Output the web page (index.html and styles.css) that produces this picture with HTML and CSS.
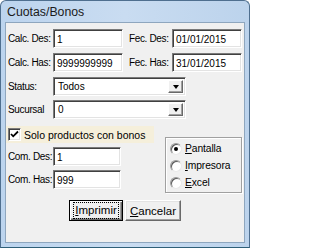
FILE: index.html
```html
<!DOCTYPE html>
<html>
<head>
<meta charset="utf-8">
<link rel="stylesheet" href="styles.css">
</head>
<body>
<div class="window">
  <div class="titlebar">Cuotas/Bonos</div>
  <div class="client">
    <div class="row r1">
      <span class="lbl">Calc. Des:</span><span class="tb w70">1</span>
      <span class="lbl lbl2">Fec. Des:</span><span class="tb w70">01/01/2015</span>
    </div>
    <div class="row r2">
      <span class="lbl">Calc. Has:</span><span class="tb w70">9999999999</span>
      <span class="lbl lbl2">Fec. Has:</span><span class="tb w70">31/01/2015</span>
    </div>
    <div class="row r3">
      <span class="lbl">Status:</span>
      <span class="combo"><span class="combo-text">Todos</span><span class="drop"><span class="arrow"></span></span></span>
    </div>
    <div class="row r4">
      <span class="lbl">Sucursal</span>
      <span class="combo"><span class="combo-text">0</span><span class="drop"><span class="arrow"></span></span></span>
    </div>
    <div class="lower">
      <div class="left">
        <div class="check-band">
          <span class="check"><svg width="9" height="9" viewBox="0 0 9 9"><polyline points="1,4 3.2,6.3 8,1.5" fill="none" stroke="#000" stroke-width="1.8"/></svg></span>
          <span class="check-text">Solo productos con bonos</span>
        </div>
        <div class="row r5">
          <span class="lbl">Com. Des:</span><span class="tb w68">1</span>
        </div>
        <div class="row">
          <span class="lbl">Com. Has:</span><span class="tb w68">999</span>
        </div>
      </div>
      <div class="group">
        <div class="radio-row"><span class="radio on"></span><span class="radio-text"><u>P</u>antalla</span></div>
        <div class="radio-row"><span class="radio"></span><span class="radio-text"><u>I</u>mpresora</span></div>
        <div class="radio-row"><span class="radio"></span><span class="radio-text"><u>E</u>xcel</span></div>
      </div>
    </div>
    <div class="buttons">
      <button class="btn default"><span class="focus"><u>I</u>mprimir</span></button>
      <button class="btn"><u>C</u>ancelar</button>
    </div>
  </div>
</div>
</body>
</html>
```

FILE: styles.css
```css
* { box-sizing: border-box; }
html, body { margin: 0; padding: 0; }
body {
  width: 250px;
  height: 248px;
  overflow: hidden;
  background: #ffffff;
  font-family: "Liberation Sans", Arial, sans-serif;
  font-size: 10px;
  color: #000;
}
.window {
  width: 250px;
  height: 248px;
  border: 1px solid #4f6f8f;
  border-bottom-color: #2f5f78;
  border-radius: 6px 6px 0 0;
  background: linear-gradient(90deg, #bcd4ee, #c9dcf1 50%, #bcd3ec);
  display: flex;
  flex-direction: column;
  padding: 0 4px 4px;
}
.titlebar {
  height: 21px;
  flex: none;
  display: flex;
  align-items: center;
  padding: 1px 0 0 2px;
  font-size: 12.3px;
  color: #1b1b1b;
}
.client {
  flex: 1;
  background: #f0f0f0;
  border: 1px solid #8ea6be;
  padding: 6px 0 0 1px;
}
.row {
  display: flex;
  align-items: center;
  height: 19px;
}
.r1, .r2 { margin-bottom: 5px; }
.r3 { margin-bottom: 4px; }
.r4 { margin-bottom: 7px; }
.r5 { margin-bottom: 4px; }
.lbl {
  width: 46px;
  padding-left: 1px;
  font-size: 10px;
  letter-spacing: -0.35px;
  white-space: nowrap;
}
.lbl2 { width: 44px; margin-left: 5px; }
.tb {
  height: 19px;
  background: #fff;
  border-style: solid;
  border-width: 1px;
  border-color: #7a7a7a #ffffff #ffffff #7a7a7a;
  box-shadow: inset 1px 1px 0 #404040, inset -1px -1px 0 #e3e3e3;
  padding: 1px 0 0 3px;
  display: flex;
  align-items: center;
  white-space: nowrap;
}
.w70 { width: 70px; }
.w68 { width: 68px; }
.combo {
  width: 133px;
  height: 19px;
  background: #fff;
  border-style: solid;
  border-width: 1px;
  border-color: #7a7a7a #ffffff #ffffff #7a7a7a;
  box-shadow: inset 1px 1px 0 #404040, inset -1px -1px 0 #e3e3e3;
  padding: 2px 2px 2px 3px;
  display: flex;
  align-items: stretch;
}
.combo-text {
  flex: 1;
  display: flex;
  align-items: center;
  padding-left: 1px;
}
.drop {
  width: 15px;
  background: #f0f0f0;
  border-style: solid;
  border-width: 1px;
  border-color: #ffffff #696969 #696969 #ffffff;
  box-shadow: inset -1px -1px 0 #a0a0a0;
  display: flex;
  align-items: center;
  justify-content: center;
}
.arrow {
  width: 0;
  height: 0;
  border-left: 3.5px solid transparent;
  border-right: 3.5px solid transparent;
  border-top: 4px solid #000;
  margin-top: 1px;
}
.lower {
  display: flex;
  align-items: flex-start;
}
.left { width: 158px; }
.check-band {
  margin-left: -1px;
  width: 148px;
  height: 17px;
  background: #f5efdb;
  display: flex;
  align-items: center;
  padding-left: 2px;
  margin-bottom: 4px;
}
.check {
  width: 13px;
  height: 13px;
  background: #fff;
  border-style: solid;
  border-width: 1px;
  border-color: #7a7a7a #ffffff #ffffff #7a7a7a;
  box-shadow: inset 1px 1px 0 #404040, inset -1px -1px 0 #e3e3e3;
  display: flex;
  align-items: center;
  justify-content: center;
  margin-right: 3px;
}
.check svg { display: block; }
.check-text {
  font-size: 10.5px;
  white-space: nowrap;
}
.group {
  width: 77px;
  height: 56px;
  margin-top: 11px;
  border: 1px solid #a0a0a0;
  box-shadow: inset 1px 1px 0 #ffffff, 1px 1px 0 #ffffff;
  padding: 2px 0 0 4px;
}
.radio-row {
  height: 17px;
  display: flex;
  align-items: center;
}
.radio {
  width: 12px;
  height: 12px;
  border-radius: 50%;
  background: #fff;
  border: 1px solid;
  border-color: #9a9a9a #e8e8e8 #e8e8e8 #9a9a9a;
  box-shadow: inset 1px 1px 0 #5a5a5a;
  margin-right: 3px;
  position: relative;
}
.radio.on::after {
  content: "";
  position: absolute;
  left: 3px;
  top: 3px;
  width: 4px;
  height: 4px;
  border-radius: 50%;
  background: #000;
}
.radio-text {
  font-size: 10.3px;
  letter-spacing: -0.1px;
  white-space: nowrap;
}
u { text-decoration: underline; text-underline-offset: 1px; }
.buttons {
  display: flex;
  justify-content: center;
  gap: 2px;
  margin-top: 7px;
  padding-right: 1px;
}
.btn {
  height: 21px;
  font-family: "Liberation Sans", Arial, sans-serif;
  font-size: 11.5px;
  color: #000;
  background: #f0f0f0;
  border-style: solid;
  border-width: 1px;
  border-color: #ffffff #696969 #696969 #ffffff;
  box-shadow: inset -1px -1px 0 #a0a0a0, inset 1px 1px 0 #e3e3e3;
  padding: 0;
  margin: 0;
  display: flex;
  align-items: center;
  justify-content: center;
}
.btn:nth-child(2) { width: 56px; }
.btn.default {
  width: 54px;
  border: 1px solid #000;
  box-shadow: inset 1px 1px 0 #ffffff, inset -1px -1px 0 #696969, inset -2px -2px 0 #a0a0a0;
}
.focus {
  outline: 1px dotted #000;
  outline-offset: 0;
  padding: 1px 1px;
  line-height: 13px;
}
```
